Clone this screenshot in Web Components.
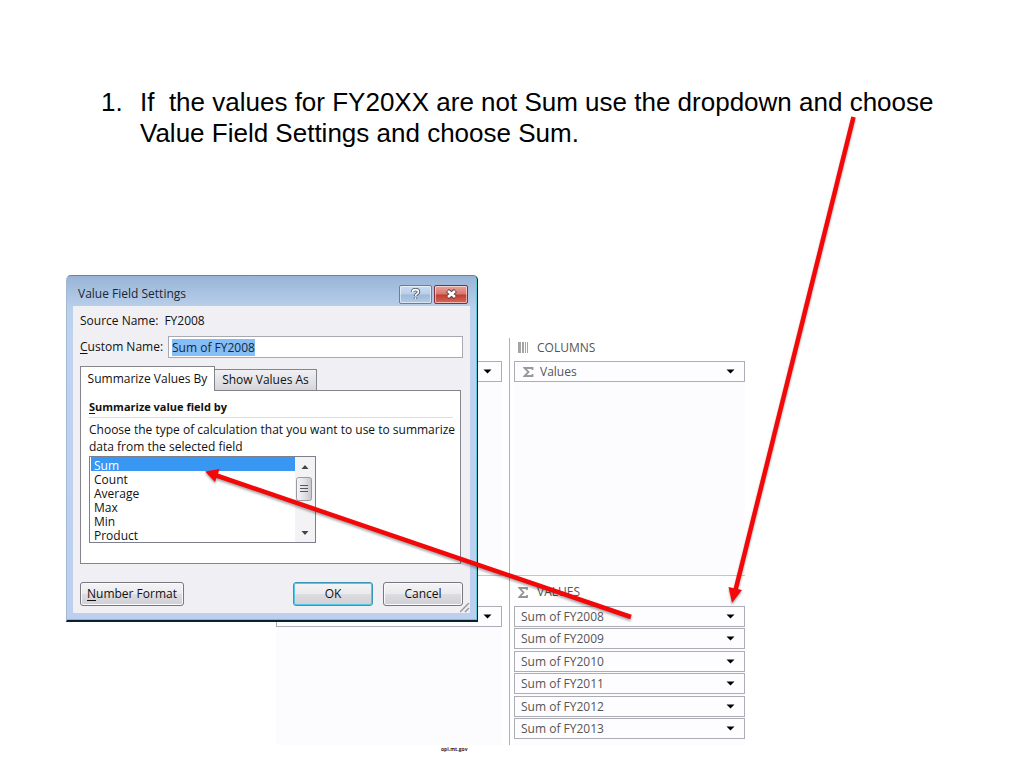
<!DOCTYPE html>
<html lang="en">
<head>
<meta charset="utf-8">
<title>Value Field Settings</title>
<style>
  body { margin: 0; background: #fff; font-family: "Liberation Sans", Arial, sans-serif; color: #000; }
</style>
</head>
<body>
<guide-slide>
  <step-list slot="steps">
    <li>If  the values for FY20XX are not Sum use the dropdown and choose Value Field Settings and choose Sum.</li>
  </step-list>
  <pivot-areas slot="figure"></pivot-areas>
  <value-dialog slot="dialog"></value-dialog>
  <arrow-layer slot="arrows"></arrow-layer>
  <span slot="source">opi.mt.gov</span>
</guide-slide>

<script>
const define = (name, html, setup) => {
  const template = document.createElement('template');
  template.innerHTML = html;
  customElements.define(name, class extends HTMLElement {
    constructor() {
      super();
      this.attachShadow({ mode: 'open' }).append(template.content.cloneNode(true));
    }
    connectedCallback() { if (setup) setup(this, this.shadowRoot); }
  });
};

define('guide-slide', `
  <style>
    :host { display: block; position: relative; min-height: 100vh; box-sizing: border-box; padding: 87px 66px 0; }
    .stage { position: relative; margin-top: 126px; padding: 63px 0 0 210px; }
    .dialog { position: absolute; left: 0; top: 0; }
    footer { padding-left: 375px; font: bold 5px/8px "Open Sans", sans-serif; color: #3c1820; }
  </style>
  <slot name="steps"></slot>
  <div class="stage">
    <slot name="figure"></slot>
    <div class="dialog"><slot name="dialog"></slot></div>
  </div>
  <footer><slot name="source"></slot></footer>
  <slot name="arrows"></slot>`);

define('step-list', `
  <style>
    :host { display: block; font-size: 26px; line-height: 31px; padding-left: 35px; }
    ::slotted(li) { white-space: pre-wrap; list-style: none; }
    .row { display: grid; grid-template-columns: 39px 1fr; }
  </style>
  <div class="row" role="list"><span>1.</span><slot></slot></div>`);

define('area-field', `
  <style>
    :host { display: block; }
    .field { display: flex; position: relative; align-items: center; height: 21px; box-sizing: border-box; border: 1px solid #adadb5; background: #fdfdff; color: #555; }
    .sigma { margin-left: 8px; flex: none; }
    :host(:not([sigma])) .sigma { display: none; }
    select { appearance: none; flex: 1; min-width: 0; height: 19px; border: 0; margin: 0; padding: 0 20px 0 6px; background: none; color: inherit; font: 12px/19px "Open Sans", "Noto Sans", sans-serif; outline: none; }
    .down { position: absolute; right: 9px; top: 7px; pointer-events: none; }
  </style>
  <div class="field">
    <svg class="sigma" width="11" height="10" viewBox="0 0 11 10"><path d="M9.5 3V1H1.5L5.5 5L1.5 9H9.5V7" fill="none" stroke="#999" stroke-width="1.800"/></svg>
    <select></select>
    <svg class="down" width="9" height="5" viewBox="0 0 9 5"><path d="M0.5 0.5H8.5L4.5 4.5Z" fill="#000"/></svg>
  </div>`, (host, root) => {
  const select = root.querySelector('select');
  select.setAttribute('aria-label', host.getAttribute('name') || host.getAttribute('label'));
  if (host.getAttribute('label')) select.append(new Option(host.getAttribute('label')));
});

define('pivot-areas', `
  <style>
    :host { display: grid; grid-template-columns: 226px 235px; column-gap: 8px; width: 469px; grid-template-rows: 237px 170px; font: 12px/16px "Open Sans", "Noto Sans", sans-serif; color: #555;
      background: linear-gradient(#b0b0b8, #b0b0b8) 233px 0 / 1px 100% no-repeat; }
    section { display: flex; flex-direction: column; background: linear-gradient(#fcfcff, #fcfcff) 0 24px / 100% 100% no-repeat; }
    section.low { border-top: 1px solid #c4c4cb; }
    h2 { display: flex; align-items: center; gap: 9px; margin: 0; height: 23px; box-sizing: border-box; padding-bottom: 4px; font: inherit; }
    .right { padding-left: 4px; background-position: 4px 24px; }
    .right h2 { padding-left: 4px; }
    .low h2 { height: 30px; padding: 2px 0 0 4px; }
    .fields { display: flex; flex-direction: column; justify-content: space-between; }
    .six { height: 133px; }
  </style>
  <section><h2></h2><area-field name="Filters"></area-field></section>
  <section class="right">
    <h2><svg width="10" height="11" viewBox="0 0 10 11"><path d="M0 0h3v11h-3zM4 0h2v11h-2zM7 0h1v11h-1zM9 0h1v11h-1z" fill="#a5a5a5"/></svg>COLUMNS</h2>
    <area-field sigma label="Values"></area-field>
  </section>
  <section class="low"><h2></h2><area-field name="Rows"></area-field></section>
  <section class="low right">
    <h2><svg width="10" height="11" viewBox="0 0 10 11"><path d="M9 3V1H1.5L5.5 5.5L1.5 10H9V8" fill="none" stroke="#949494" stroke-width="1.800"/></svg>VALUES</h2>
    <div class="fields six">
      <area-field label="Sum of FY2008"></area-field>
      <area-field label="Sum of FY2009"></area-field>
      <area-field label="Sum of FY2010"></area-field>
      <area-field label="Sum of FY2011"></area-field>
      <area-field label="Sum of FY2012"></area-field>
      <area-field label="Sum of FY2013"></area-field>
    </div>
  </section>`);

define('push-button', `
  <style>
    :host { display: block; }
    button { width: 100%; height: 24px; padding: 0; border: 1px solid #77777d; border-radius: 3px; background: linear-gradient(#f4f4f6, #ebebee 48%, #dcdce1 52%, #cfcfd5); box-shadow: inset 0 0 0 1px #fafafc; font: 12px/20px "Open Sans", "Noto Sans", sans-serif; color: #111; }
    :host([primary]) button { border-color: #3c94b8; box-shadow: inset 0 0 0 1px #55c8ea; }
  </style>
  <button type="button"><slot></slot></button>`);

define('calc-list', `
  <style>
    :host { display: grid; grid-template-columns: 1fr 20px; grid-template-rows: 85px; width: 227px; height: 87px; box-sizing: border-box; border: 1px solid #7d808a; background: #fff; }
    select { appearance: none; display: block; box-sizing: border-box; border: 0; margin: 0; padding: 0 0 0 1px; width: 100%; height: 85px; overflow: hidden; outline: none; border-radius: 0; font: 12px/14px "Open Sans", "Noto Sans", sans-serif; color: #111; background: #fff; }
    option { padding: 0 3px; height: 14px; min-height: 14px; line-height: 14px; }
    option:checked { background: linear-gradient(#3797f3, #3797f3); -webkit-text-fill-color: #fff; }
    .bar { background: #f3f3f6; }
    svg { display: block; }
  </style>
  <select size="6" aria-label="Summarize value field by">
    <option selected>Sum</option><option>Count</option><option>Average</option><option>Max</option><option>Min</option><option>Product</option>
  </select>
  <div class="bar">
    <svg width="20" height="85" viewBox="0 0 20 85">
      <defs><linearGradient id="g"><stop offset="0" stop-color="#f6f6f8"/><stop offset=".5" stop-color="#e2e2e7"/><stop offset="1" stop-color="#c4c4cc"/></linearGradient></defs>
      <path d="M6.500 12L10 8L13.500 12Z" fill="#444"/><path d="M6.500 74H13.500L10 78Z" fill="#444"/>
      <rect x="1.500" y="20.500" width="15" height="23" rx="2" fill="url(#g)" stroke="#9a9aa2"/>
      <path d="M5 28.500h8M5 31.500h8M5 34.500h8" stroke="#55555c"/>
    </svg>
  </div>`);

define('value-dialog', `
  <style>
    :host { display: block; box-sizing: border-box; width: 412px; border: 1px solid #6d8299; border-left-color: #a3b9d2; border-right: 1px solid #07222c; border-bottom: 2px solid #07222c; border-radius: 5px 5px 0 0; padding: 0 7px 7px 6px;
      background: linear-gradient(#99b4d6, #b9d0eb 32px, #bfd3ef 60px, #bccfef); box-shadow: inset -1px -1px #5fcbdc; font: 12px/16px "Open Sans", "Noto Sans", sans-serif; color: #111; }
    header { display: flex; align-items: center; height: 30px; padding: 6px 2px 0 5px; box-sizing: border-box; gap: 2px; color: #1b2733; }
    h1 { flex: 1; margin: 0; font: inherit; }
    header button { width: 33px; height: 19px; padding: 0; border: 1px solid #63809f; border-radius: 2px; display: grid; place-items: center; box-shadow: inset 0 0 0 1px #ffffff88; background: linear-gradient(#cbdcf0, #b9cee8 48%, #9db9da 52%, #b2cbe8); }
    header .close { width: 34px; border-color: #7c3040; background: linear-gradient(#e8a49c, #d6766c 48%, #c13c2e 52%, #d8695c); }
    .client { position: relative; background: #f0eff4; padding: 6px 7px 7px; }
    .source { display: flex; height: 18px; align-items: center; gap: 6px; }
    .name { display: grid; grid-template-columns: 88px 1fr; align-items: center; margin: 6px 0 8px; }
    .name input { width: 100%; box-sizing: border-box; height: 22px; border: 1px solid #a9a9b2; padding: 0 3px; font: inherit; color: #111; outline: none; background: #fff; }
    input::selection { background: #86bdf5; color: #14283c; }
    u { text-underline-offset: 2px; }
    .tabs { display: flex; align-items: flex-end; margin-right: 2px; }
    .tabs button { font: inherit; color: #111; padding: 0; border: 1px solid #84848c; border-bottom: 0; height: 21px; width: 102px; background: linear-gradient(#f1f1f4, #e4e4e8 50%, #d4d4da); }
    .tabs .on { width: 135px; height: 25px; margin-bottom: -1px; background: #fff; position: relative; }
    .tabs .off { border-left: 0; }
    .panel { margin-right: 2px; border: 1px solid #84848c; background: #fff; height: 174px; box-sizing: border-box; padding: 8px 7px 0 8px; }
    h2 { margin: 0 0 3px; height: 19px; font: bold 11px/16px "Open Sans", "Noto Sans", sans-serif; border-bottom: 1px solid #dcdce6; box-sizing: border-box; }
    p { margin: 0 0 1px; line-height: 17px; white-space: nowrap; }
    .actions { display: grid; grid-template-columns: 104px 1fr 80px 80px; column-gap: 10px; margin-top: 18px; }
    .actions .ok { grid-column: 3; }
    .grip { position: absolute; right: 0; bottom: 0; }
  </style>
  <header>
    <h1>Value Field Settings</h1>
    <button type="button" aria-label="Help"><svg width="11" height="12" viewBox="0 0 11 12"><path d="M2.500 4C2.500 .8 8.500 .8 8.500 4C8.500 6 5.500 5.800 5.500 8M5.500 9.500V11" fill="none" stroke="#4d5968" stroke-width="3.400"/><path d="M2.500 4C2.500 .8 8.500 .8 8.500 4C8.500 6 5.500 5.800 5.500 8M5.500 9.500V11" fill="none" stroke="#fff" stroke-width="1.600"/></svg></button>
    <button type="button" class="close" aria-label="Close"><svg width="13" height="10" viewBox="0 0 13 10"><path d="M2.500 1.500L10.500 8.500M10.500 1.500L2.500 8.500" stroke="#5d4048" stroke-width="4.400"/><path d="M3 2L10 8M10 2L3 8" stroke="#fff" stroke-width="2.600"/></svg></button>
  </header>
  <div class="client">
    <div class="source"><span>Source Name:</span><span>FY2008</span></div>
    <div class="name"><label for="custom"><u>C</u>ustom Name:</label><input id="custom" type="text" value="Sum of FY2008"></div>
    <div class="tabs" role="tablist"><button type="button" role="tab" class="on" aria-selected="true">Summarize Values By</button><button type="button" role="tab" class="off">Show Values As</button></div>
    <div class="panel" role="tabpanel">
      <h2><u>S</u>ummarize value field by</h2>
      <p>Choose the type of calculation that you want to use to summarize<br>data from the selected field</p>
      <calc-list></calc-list>
    </div>
    <div class="actions">
      <push-button><u>N</u>umber Format</push-button>
      <push-button class="ok" primary>OK</push-button>
      <push-button>Cancel</push-button>
    </div>
    <svg class="grip" width="10" height="10" viewBox="0 0 10 10"><path d="M0 9L9 0M5 9L9 5" stroke="#9a9aa2" stroke-width="1.500"/></svg>
  </div>`, (host, root) => {
  const input = root.querySelector('input');
  input.focus({ preventScroll: true });
  input.select();
});

define('arrow-layer', `
  <style>
    :host { position: absolute; left: 0; top: 0; pointer-events: none; }
    svg { display: block; filter: drop-shadow(0 2px 1px #00000055); }
  </style>
  <svg width="900" height="660" viewBox="0 0 900 660" fill="#f20808" stroke="#f20808">
    <path d="M853.500 117L735 592" stroke-width="4.500"/><path d="M732 603L728.500 587L742 590Z" stroke="none"/>
    <path d="M631 617L215 475" stroke-width="4.500"/><path d="M205 471.500L219.500 469L215 482Z" stroke="none"/>
  </svg>`);
</script>
</body>
</html>
